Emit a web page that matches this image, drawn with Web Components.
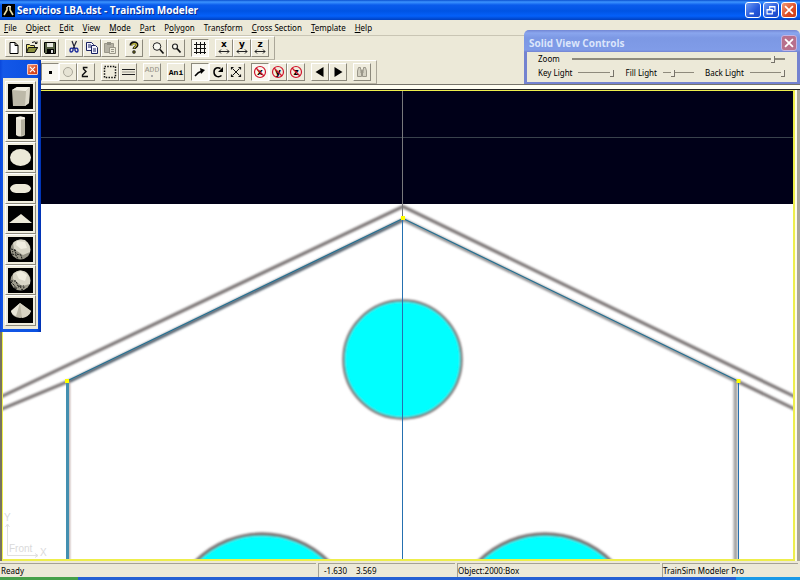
<!DOCTYPE html>
<html lang="en">
<head>
<meta charset="utf-8">
<title>Servicios LBA.dst - TrainSim Modeler</title>
<style>
html, body { margin: 0; height: 100%; overflow: hidden; }
body { font: 8px/10px "Noto Sans", "Open Sans", sans-serif; color: #000; background: #ece9d8; }
</style>
</head>
<body>
<modeler-app></modeler-app>
<script>
const define = (name, html) => customElements.define(name, class extends HTMLElement {
  connectedCallback() {
    if (this.shadowRoot) return;
    const root = this.attachShadow({ mode: 'open' });
    const t = document.createElement('template');
    t.innerHTML = typeof html === 'function' ? html(this) : html;
    root.append(t.content.cloneNode(true));
  }
});

const mirror = (letter) => `<text x="9" y="8" text-anchor="middle" font-family="DejaVu Sans" font-weight="bold" font-size="9">${letter}</text><path d="M4 12.500h10M6 10.500l-2 2 2 2M12 10.500l2 2-2 2" fill="none" stroke="#222"/>`;
const noAxis = (letter) => `<text x="9" y="12" text-anchor="middle" font-family="DejaVu Sans" font-weight="bold" font-size="9">${letter}</text><circle cx="9" cy="9" r="5.500" fill="none" stroke="#d0142c" stroke-width="1.200"/><path d="M5 5l8 8" stroke="#d0142c" stroke-width="1.200"/>`;
const icons = {
  new: '<path d="M5 3.500h5l3 3v8H5zM10 3.500v3h3" fill="#fff" stroke="#000"/>',
  open: '<path d="M3.500 13.500v-8h3l1 1h4v2h3l-3 5z" fill="#e8e070" stroke="#222"/><path d="M5.500 8.500h9l-3 5h-8z" fill="#8c9140" stroke="#111"/><path d="M9 3.500q3-2 5 1m0-2v2h-2" fill="none" stroke="#111"/>',
  save: '<path d="M3.500 3.500h11v11h-10l-1-1z" fill="#566044" stroke="#000"/><path d="M6 4h6v4H6z" fill="#e8e8e0"/><path d="M6 10h7v4H6z"/><path d="M10 11h2v3h-2z" fill="#ddd"/>',
  cut: '<path d="M7 2l3 8M11.500 2L8 10" fill="none" stroke="#223" stroke-width="1.200"/><path d="M8 9.500c-2-1-3 0-3 2s2 2 3 0zM10 9.500c2-1 3 0 3 2s-2 2-3 0z" fill="none" stroke="#1b2a9a" stroke-width="1.400"/>',
  copy: '<path d="M3.500 3.500h5l2 2v6h-7z" fill="#f4f4ff" stroke="#182060"/><path d="M5 6h3M5 8h3" stroke="#182060"/><path d="M8.500 6.500h4l2 2v6h-6z" fill="#f4f4ff" stroke="#182060"/><path d="M10 10h3M10 12h3" stroke="#182060"/>',
  paste: '<path d="M3.500 4.500h9v9h-9z" fill="#b5b2a5" stroke="#9a978a"/><path d="M6 3h4v3H6z" fill="#929084"/><path d="M8.500 8.500h6v6h-6z" fill="#eceada" stroke="#9a978a"/><path d="M10 10.500h3M10 12.500h3" stroke="#9a978a"/>',
  help: '<path d="M6 6.500C6 3 12 3 12 6c0 2-3 2-3 4" fill="none" stroke="#111" stroke-width="3"/><path d="M6.500 6.500C7 4 11.500 4 11.500 6c0 1.500-2.500 2-2.500 3.500" fill="none" stroke="#c9c23c" stroke-width="1.200"/><circle cx="9" cy="13" r="1.700"/><circle cx="9" cy="13" r=".700" fill="#c9c23c"/>',
  zoomin: '<circle cx="8" cy="7.500" r="3.800" fill="#f8f8f0" stroke="#222"/><path d="M11 10.500l3.500 4" stroke="#111" stroke-width="1.700"/>',
  zoomout: '<circle cx="8" cy="7.500" r="2.500" fill="#f8f8f0" stroke="#222" stroke-width="1.200"/><path d="M10 9.500l3.500 4" stroke="#111" stroke-width="1.800"/>',
  grid: '<path d="M3 5.500h12M3 9.500h12M3 13.500h12M5.500 3v12M9.500 3v12M13.500 3v12" stroke="#111" fill="none"/>',
  mx: mirror('x'), my: mirror('y'), mz: mirror('z'),
  vertex: '<path d="M8 8h3v3H8z"/>',
  circle: '<circle cx="9" cy="9" r="4.500" fill="#e6e3d4" stroke="#aaa79a"/>',
  part: '<path d="M10.500 4.500H6.500V6l2.500 2.500L5.500 12v1.500h5.500" fill="none" stroke="#111" stroke-width="1.400"/>',
  marquee: '<path d="M3.500 3.500h11v11h-11z" fill="none" stroke="#111" stroke-width="1.500" stroke-dasharray="1.500 1.250"/>',
  lines: '<path d="M3 6.500h13M3 11.500h13" stroke="#222"/><path d="M3 8h13v2H3z" fill="#c4c1b4"/>',
  add: '<text x="9" y="9" text-anchor="middle" font-family="Liberation Mono" font-size="8" fill="#98958a">ADD</text><path d="M8 12h2v2H8z" fill="#aaa"/>',
  ani: '<text x="9" y="12" text-anchor="middle" font-family="Liberation Mono" font-weight="bold" font-size="8">Ani</text>',
  arrow: '<path d="M4 13q3-4 7-5" fill="none" stroke="#000" stroke-width="1.400"/><path d="M9 5l5 2-4 4z"/>',
  rotate: '<path d="M12.500 12.500c-3 2.500-7.500 1-7.500-3.500s4-5 6.500-3.500" fill="none" stroke="#000" stroke-width="1.500"/><path d="M14 4v5H9z"/>',
  scale: '<path d="M5.500 5.500l7 7m0-7l-7 7" stroke="#111"/><path d="M4.500 6.500v-2h2m5 0h2v2m0 5v2h-2m-5 0h-2v-2" fill="none" stroke="#111" stroke-width="1.200"/>',
  nx: noAxis('x'), ny: noAxis('y'), nz: noAxis('z'),
  prev: '<path d="M12.500 4v10L4.500 9z"/>', next: '<path d="M5.500 4v10l8-5z"/>',
  find: '<path d="M5.500 4.500h2v2l1 1.500v5.500h-4V8zM10.500 4.500h2l1 3.500v5.500h-4V8l1-1.500zM8 7h2v3H8z" fill="#d4d1c2" stroke="#9a978a"/>'
};
const shapes = {
  Box: '<path d="M4 6l5-3h13l-1 16-4 3H5z" fill="#bdb9a8"/><path d="M4 6l5-3h13l-4 4z" fill="#f2efe2"/><path d="M18 7l4-4-1 16-4 3z" fill="#dedacb"/>',
  Cylinder: '<path d="M8 4q4-3 9 0v17q-5 3-9 0z" fill="#e5e1d2"/><path d="M13 5h4v16l-4 1z" fill="#b4b09f"/><ellipse cx="12.500" cy="4" rx="4.500" ry="1.500" fill="#f4f1e5"/>',
  Disc: '<ellipse cx="12.500" cy="12.500" rx="10.500" ry="8.500" fill="#ece9d8"/>',
  Ring: '<path d="M2 12.500q1-4 6-4.500h9q5 .500 6 4.500-1 4-6 4.500H8q-5-.500-6-4.500z" fill="#ece9d8"/>',
  Polygon: '<path d="M1 17l12-9 11 9z" fill="#ece9d8"/>',
  Sphere: '<circle cx="12.500" cy="12.500" r="10" fill="#969486"/><path d="M5 6q5-5 12-3 6 5 5 12l-7 3-9-6z" fill="#d8d5c6"/><path d="M9 4l8 1 2 6-6 1-5-4z" fill="#f0ede0"/><path d="M3 12l4 1 1 4 5 1 1 4M4 17l4 1 2 4M8 13l-4 2" fill="none" stroke="#171716" stroke-dasharray="2 1"/>',
  Geosphere: '<circle cx="12.500" cy="12.500" r="10" fill="#a09d8e"/><path d="M5 6q6-6 13-2 5 5 4 12l-8 2-9-7z" fill="#d8d5c6"/><path d="M8 5l5-2 6 4-2 6-6-2z" fill="#f0ede0"/><path d="M3 13l5 0 2 5 6 0M3 14l4 4 0 3 5-3 2 4 3-4" fill="none" stroke="#171716" stroke-dasharray="2 1"/>',
  Cone: '<path d="M12 5L3 13q1 6 9 7 9-1 11-7z" fill="#bcb8a7"/><path d="M12 5L3 13q1 4 5 5z" fill="#e9e6d8"/><path d="M12 5l2 15q7-1 9-7z" fill="#d7d3c3"/>'
};

define('xp-caption-button', (el) => {
  const kind = el.getAttribute('kind');
  const glyph = { min: '<path d="M4 11h5v2H4z" fill="#fff"/>',
    restore: '<path d="M6.500 7V4h6v5h-3M6 4.500h7M3.500 7.500h6v5h-6zM3 8h7" fill="none" stroke="#fff" stroke-width="1.300"/>',
    close: '<path d="M3.500 3.500l9 9m0-9l-9 9" stroke="#fff" stroke-width="2"/>' }[kind];
  return `<style>
  :host { display: block; width: 16px; height: 16px; flex: none; }
  :host([small]) { width: 11px; height: 11px; }
  button { display: block; width: 100%; height: 100%; padding: 0; border: 1px solid #fff; border-radius: 3px; background: linear-gradient(135deg, #6f9cf4, #2458dc 60%, #1c48c4); }
  :host([kind=close]) button { background: linear-gradient(135deg, #f09a78, #dc4c24 60%, #c83c18); }
  :host([faded]) button { background: #b8708c; border-color: #c3b4e4; }
  :host([small]) button { border-radius: 1px; border-color: #f4c8c0; }
  svg { display: block; width: 100%; height: 100%; }
  </style><button aria-label="${kind}"><svg viewBox="0 0 16 16">${glyph}</svg></button>`;
});

define('title-bar', `<style>
  :host { display: flex; align-items: center; height: 20px; flex: none; padding: 0 3px 0 2px; gap: 2px; color: #fff; background: linear-gradient(#0a50d0, #3c94ff 2px, #0a5cec 5px, #0054e4 11px, #0460fa 16px, #0040c0); }
  svg { width: 13px; height: 13px; flex: none; }
  h1 { margin: 0; flex: 1; font: bold 10px/14px "Open Sans", sans-serif; text-shadow: 1px 1px #0a2c90; white-space: nowrap; }
  </style>
  <svg viewBox="0 0 13 13"><path d="M0 0h13v13H0z"/><path d="M2 11l3-5V3M11 11L8 6V2" fill="none" stroke="#e9dfaa" stroke-width="1.600"/><path d="M5 3l2-1 2 1" stroke="#fff" fill="none"/></svg>
  <h1><slot></slot></h1>
  <xp-caption-button kind="min"></xp-caption-button><xp-caption-button kind="restore"></xp-caption-button><xp-caption-button kind="close"></xp-caption-button>`);

const menus = ['_File', '_Object', '_Edit', '_View', '_Mode', '_Part', 'P_olygon', 'Tran_sform', '_Cross Section', '_Template', '_Help'];
define('menu-bar', `<style>
  :host { display: flex; gap: 9px; height: 16px; box-sizing: border-box; padding-left: 4px; align-items: center; flex: none; border-bottom: 1px solid #c9c5b4; }
  button { all: unset; white-space: nowrap; }
  u { text-underline-offset: 1px; }
  </style>${menus.map(m => `<button>${m.replace(/_(.)/, '<u>$1</u>')}</button>`).join('')}`);

define('tool-button', (el) => `<style>
  :host { display: block; width: 18px; height: 18px; flex: none; }
  button { display: block; width: 100%; height: 100%; padding: 0; background: #efecdd; border: 1px solid; border-color: #fff #8c897c #8c897c #fff; }
  button[aria-pressed=true] { background: #f8f7f0; border-color: #8c897c #fff #fff #8c897c; }
  svg { display: block; width: 100%; height: 100%; }
  </style><button aria-label="${el.getAttribute('icon')}" aria-pressed="${el.hasAttribute('pressed')}"><svg viewBox="1 1 16 16">${icons[el.getAttribute('icon')]}</svg></button>`);

define('tool-bar', (el) => `<style>
  :host { display: flex; gap: 6px; width: max-content; flex: none; padding: 2px 5px 2px; border: 1px solid; border-color: #fff #aaa698 #b9b5a5 transparent; border-left: 0; }
  div { display: flex; }
  </style>${el.getAttribute('groups').split('|').map(g => `<div>${g.split(' ').map(i => `<tool-button icon="${i.replace('*', '')}" ${i.includes('*') ? 'pressed' : ''}></tool-button>`).join('')}</div>`).join('')}`);

define('model-view', `<style>
  :host { display: block; flex: 1; min-height: 0; margin: 0 5px 0 2px; border: 2px solid #eeee4c; border-left-width: 1px; border-top-width: 1px; background: #fff; box-shadow: -2px 0 #77725f, 2px 0 #fffce8, 5px 0 #aaa79a; box-sizing: border-box; }
  svg { display: block; width: 100%; height: 100%; }
  </style>
  <svg viewBox="3 91 790 468" preserveAspectRatio="xMidYMid slice" role="img" aria-label="Front view">
  <defs><filter id="soft" x="-5%" y="-5%" width="110%" height="110%"><feGaussianBlur stdDeviation=".800"/></filter></defs>
  <path d="M0 90h800v114H0z" fill="#000018"/>
  <path d="M0 137.500h800" stroke="#39424c"/>
  <g fill="none" stroke="#7c7676" stroke-width="3.300" filter="url(#soft)">
    <path d="M-8 401L403 206.500 814 406"/>
    <path d="M-8 413L68 381.500M738 381.500L814 418.500"/>
    <path d="M68 382L403 220" stroke="#566470" stroke-width="3.500"/><path d="M403 219.500L738 382" stroke="#8e8e90"/>
    <circle cx="402.500" cy="359.500" r="59" fill="#0ff" stroke-width="2.500"/>
    <circle cx="262" cy="628" r="94" fill="#0ff"/>
    <circle cx="545" cy="628" r="94" fill="#0ff"/>
    <path d="M735.500 382v190" stroke="#a2a2a2" stroke-width="4"/><path d="M69 382v190" stroke="#b59c98" stroke-width="2"/>
  </g>
  <path d="M403 218.500L67 381M403 218.500L738 381" stroke="#236f91" fill="none" stroke-width="1.200"/>
  <path d="M67.500 381v190" stroke="#438fb0" stroke-width="3"/><path d="M738.500 381v190M402.500 218v350" stroke="#2570b0"/>
  <path d="M402.500 90v128" stroke="#78797c"/>
  <path d="M401 216h4v4h-4zM65 379h4v4h-4zM736.500 379h4v4h-4z" fill="#ff0"/>
  <g stroke="#e0e0e0" fill="none"><path d="M7.500 524v31.500H38M5.500 527l2-3 2 3M35 553.500l3 2-3 2"/></g>
  <g fill="#dadada" font-family="Liberation Sans" font-size="10"><text x="4" y="521">Y</text><text x="9" y="552">Front</text><text x="40" y="556">X</text></g>
  </svg>`);

define('status-bar', `<style>
  :host { display: grid; grid-template-columns: 318fr 139fr 205fr 138fr; height: 16px; flex: none; align-items: center; padding-top: 1px; box-sizing: border-box; }
  span { white-space: pre; height: 14px; line-height: 13px; box-sizing: border-box; border: solid #a5a294; border-width: 1px 0 0 1px; margin-right: 2px; }
  .state { border-left: 0; padding-left: 1px; }
  .coords { padding-left: 5px; display: flex; gap: 9px; }
  </style><span class="state">Ready</span><span class="coords"><data>-1.630</data><data>3.569</data></span><span>Object:2000:Box</span><span>TrainSim Modeler Pro</span>`);

define('light-slider', (el) => `<style>
  :host { display: flex; align-items: center; gap: 6px; }
  label { white-space: nowrap; }
  input { appearance: none; flex: 1; width: 30px; min-width: 0; margin: 0; height: 8px; background: linear-gradient(#8e8a7c, #8e8a7c) 0 3px / 100% 1px no-repeat; }
  input::-webkit-slider-thumb { appearance: none; width: 4px; height: 7px; box-sizing: border-box; background: #f0eddf; border: solid #77736a; border-width: 0 1px 1px 0; }
  :host([wide]) { gap: 12px; }
  :host([wide]) input { background-size: 100% 2px; }
  </style><label for="s">${el.getAttribute('label')}</label><input id="s" type="range" value="${el.getAttribute('value')}">`);

define('solid-controls', `<style>
  :host { display: block; position: absolute; right: 0; top: 30px; width: 276px; height: 54px; box-sizing: border-box; padding: 0 3px 2px; border-radius: 5px 5px 0 0; background: linear-gradient(#7286d4, #8aa6ee 3px, #7c98e4 8px, #809ce8 20px, #7483d0 22px); }
  header { display: flex; align-items: center; height: 22px; padding-top: 4px; box-sizing: border-box; }
  h2 { margin: 0 0 0 2px; flex: 1; font: bold 10px/14px "Open Sans", sans-serif; color: #dbe5fb; }
  main { height: 30px; background: #ece9d8; box-sizing: border-box; padding: 2px 12px 0 11px; }
  div { display: grid; grid-template-columns: 76px 68px 80px; justify-content: space-between; margin-top: 4px; }
  </style><header><h2>Solid View Controls</h2><xp-caption-button kind="close" faded></xp-caption-button></header>
  <main><light-slider wide label="Zoom" value="95"></light-slider><div><light-slider label="Key Light" value="100"></light-slider><light-slider label="Fill Light" value="30"></light-slider><light-slider label="Back Light" value="100"></light-slider></div></main>`);

define('shape-palette', `<style>
  :host { display: flex; flex-direction: column; position: absolute; left: 0; top: 60px; width: 41px; height: 272px; box-sizing: border-box; padding: 0 3px 3px; background: linear-gradient(90deg, #0a48dc, #1458e8 3px, #0a50e0 37px, #0030b0); }
  header { height: 18px; flex: none; display: flex; align-items: center; justify-content: flex-end; }
  main { flex: 1; display: grid; grid-template-rows: repeat(8, 1fr); background: #ece9d8; padding: 3px 2px; }
  button { padding: 0; border: 1px solid; border-color: #fff #8c897c #8c897c #fff; background: #f0edde; display: grid; place-items: center; min-height: 0; }
  svg { width: 25px; height: 25px; background: #000; display: block; }
  </style><header><xp-caption-button kind="close" small></xp-caption-button></header>
  <main>${Object.entries(shapes).map(([n, s]) => `<button aria-label="${n}"><svg viewBox="0 0 25 25">${s}</svg></button>`).join('')}</main>`);

define('modeler-app', `<style>
  :host { display: flex; flex-direction: column; position: relative; height: 100vh; overflow: hidden; background: #ece9d8; }
  .bars { display: flex; flex-direction: column; flex: none; border-bottom: 1px solid #77746a; }
  .gap { height: 5px; flex: none; background: linear-gradient(#fffef2 4px, #222 4px); }
  .taskbar { height: 3px; flex: none; background: linear-gradient(90deg, #46a04a 78px, #2560d4 78px 92%, #1a9ae8 92%); }
  </style>
  <title-bar>Servicios LBA.dst - TrainSim Modeler</title-bar>
  <menu-bar></menu-bar>
  <div class="bars">
    <tool-bar groups="new open save|cut copy paste|help|zoomin zoomout|*grid|mx my mz"></tool-bar>
    <tool-bar groups="new open *vertex circle part|marquee lines|add|ani|*arrow rotate scale|*nx ny nz|prev next|find"></tool-bar>
  </div>
  <div class="gap"></div>
  <model-view></model-view>
  <status-bar></status-bar>
  <div class="taskbar"></div>
  <solid-controls></solid-controls>
  <shape-palette></shape-palette>`);
</script>
</body>
</html>
